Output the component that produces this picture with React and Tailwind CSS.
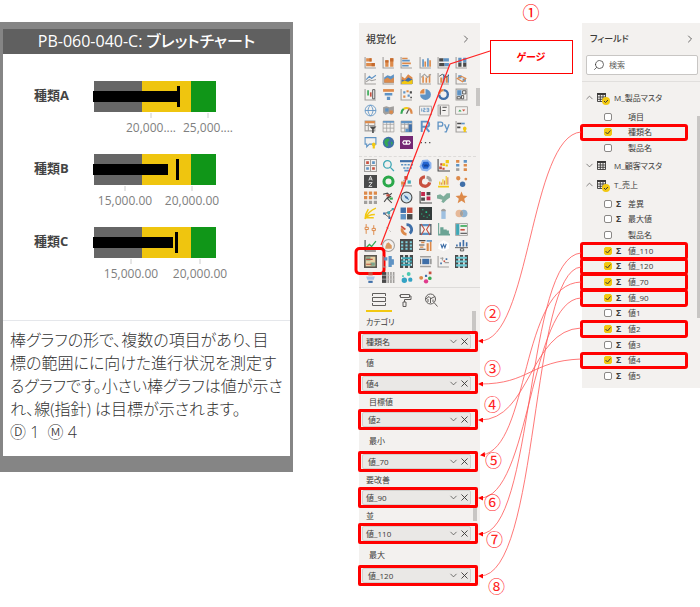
import React, { useState } from 'react';
import { ChevronDown, ChevronRight, ChevronUp, Search, X } from 'lucide-react';
import clsx from 'clsx';

const O = '#dd8a4a';
const B = '#5f93c4';
const N = '#3f6fa8';
const G = '#a19f9d';
const D = '#4a4a4a';
const Y = '#f2c811';
const T = '#3fa7b5';
const R = '#c9503f';
const V = '#35a853';

// [colour, path, stroke width] - no width means a filled path
const AXIS = [G, 'M1 1v10h10', 1];
const GRID = 'M1 1h10v10H1zM1 4h10M1 7.5h10M4.3 1v10M7.6 1v10';

const STANDARD = [
    [AXIS, [O, 'M2 2h5v3H2zM2 6.5h8v3H2z'], ['#c46a2e', 'M5 2h2v3H5zM7 6.5h3v3H7z']],
    [AXIS, [O, 'M3 4h3v6H3zM7.5 2h3v8h-3z'], ['#c46a2e', 'M3 4h3v2H3zM7.5 2h3v3h-3z']],
    [AXIS, [O, 'M2 1.5h5V3H2zM2 6h8v1.5H2z'], [B, 'M2 3.5h7V5H2zM2 8.2h6v1.5H2z']],
    [AXIS, [B, 'M3 3h1.5v7H3zM7.5 2H9v8H7.5z'], [O, 'M5 5h1.5v5H5zM9.5 4H11v6H9.5z']],
    [AXIS, [D, 'M2 2h4v3H2zM2 6.5h5v3H2z'], [B, 'M6 2h5v3H6zM7 6.5h4v3H7z']],
    [AXIS, [D, 'M3 6h3v4H3zM7.5 6h3v4h-3z'], [B, 'M3 1.5h3V6H3zM7.5 1.5h3V6h-3z']],
    [AXIS, [B, 'M2 7l3-3 2 2 4-3', 1], [G, 'M2 9l3-2 2 1 4-1', 1]],
    [AXIS, [B, 'M2 5l3-2 3 1 3-2v8H2z'], [O, 'M2 7l3-2 3 2 3-2v5H2z']],
    [AXIS, [O, 'M1.5 4l3 2 3-4 4 3v6h-10z'], [N, 'M1.5 7l3 1 3-3 4 2v4h-10z'], [Y, 'M1.5 9l3-1 3 1 4-2v4h-10z']],
    [AXIS, [O, 'M3 4h1.5v6H3zM6 5h1.5v5H6zM9 2h1.5v8H9z'], [G, 'M2 5l3-3 3 3 3-3', 1]],
    [AXIS, [O, 'M3 5h2v5H3zM8 4h2v6H8z'], [B, 'M5.5 2H7v8H5.5zM10 2h1v8h-1z'], [D, 'M2 4l3-2 3 3 3-2', 0.8]],
    [AXIS, [B, 'M3 3h3v3H3zM7 6h3v3H7z'], [O, 'M2 6l4-2 4 2-3 3z', 1]],
    [AXIS, [V, 'M3 2h1.5v5H3z'], [R, 'M5.5 4H7v4H5.5z'], [D, 'M8 1.5h2V10H8z', 0.8]],
    [[O, 'M1 1h10v2.5H1z'], [B, 'M2.5 4.5h7v2.5h-7zM4.5 8h3v3h-3z']],
    [AXIS, [B, 'M3 3h2v2H3zM7 6h2v2H7z'], [O, 'M6 2h2v2H6zM3 7h2v2H3z'], [D, 'M9 3h2v2H9zM9.5 8H11v1.5H9.5z']],
    [[B, 'M6 1a5 5 0 1 1-5 5h5z'], [O, 'M5 .8V5H.8A5 5 0 0 1 5 .8z']],
    [[N, 'M6 2a4 4 0 1 1-4 4', 2.2], [O, 'M2 5.5a4 4 0 0 1 4-3.5', 2.2]],
    [[G, 'M1 1h10v10H1z', 1], [B, 'M2 2h4v5H2z'], [D, 'M7 2.5h3v3H7zM2 8h3v2H2zM6 7h2v3H6z', 0.8]],
    [[B, 'M6 1a5 5 0 1 0 0 10A5 5 0 1 0 6 1zM1 6h10M6 1c-3 3-3 7 0 10M6 1c3 3 3 7 0 10', 0.8]],
    [[G, 'M1 3l3-1 3 1 4-1v6l-2 2-3-1-3 1-2-2z'], [B, 'M3 4h3v3H3z'], [O, 'M7 6h3v3H7z']],
    [[V, 'M1.5 9a4.500 4.500 0 0 1 2-4.500', 2], [Y, 'M3.5 4.5a4.500 4.500 0 0 1 4-.5', 2], [O, 'M7.5 4a4.500 4.500 0 0 1 3 5', 2], [D, 'M6 9l2-4', 1]],
    [[G, 'M.5 2h11v8H.5z', 0.8], [B, 'M2.5 4v3M4 4h1.500v1.500H4V7h2M7 4h2v3H7M7 5.500h2', 0.8]],
    [[G, 'M1 1h10v10H1z', 0.8], [D, 'M3 2v8M5 3h4M5 6h3', 1]],
    [[G, 'M.5 2.5h11v7H.5z', 0.8], [V, 'M3 7l1.500-2L6 7z'], [R, 'M6.5 5h3L8 7z']],
    [[G, 'M1 1h9v9H1zM1 5h9M4 3v7', 1], [O, 'M1 1h9v2H1z'], [D, 'M5 6h6.500L9 8.500V12H7.500V8.500z']],
    [[G, GRID, 0.7], [B, 'M1 1h10v1.500H1z']],
    [[G, GRID, 0.8], [B, 'M1 1h10v2H1zM5 8h3v3H5z'], [N, 'M8 4h3v7H8z']],
    [[B, 'M2.5 11V1.500H7a2.300 2.300 0 0 1 0 4.800H2.500M6 6.500L9.500 11', 1.8]],
    [[B, 'M1 9V2h2.500a1.800 1.800 0 0 1 0 3.700H1M7 4l2 4.500M11.200 4L8.500 11H7', 1.2]],
    [AXIS, [D, 'M2 2.5h4v1.500H2zM2 6h3v1.500H2z'], [B, 'M6 2.500h3v1.500H6z'], [Y, 'M9 6a2 2 0 0 1 1 3.500V11H8V9.500A2 2 0 0 1 9 6z']],
    [[B, 'M1 1.500h10v6H5L2.500 10V7.500H1z', 1], [Y, 'M9 6a2 2 0 0 1 1 3.500V11.500H8V9.500A2 2 0 0 1 9 6z']],
    [[N, 'M6 .8a5.200 5.200 0 1 0 0 10.400A5.200 5.200 0 1 0 6 .8z'], [V, 'M3 3l3-1 1 2-2 2 1 3-2 1-2-4zM8 5l2 1-1 3z']],
    [['#742774', 'M0 0h12v12H0z'], ['#fff', 'M5.500 4.500h-2L2.500 6l1 1.500h2L6.500 4.500h2l1 1.500-1 1.500h-2z', 1]],
    [[D, 'M1.500 5.500h1.200v1.200H1.500zM5.400 5.500h1.200v1.200H5.400zM9.300 5.500h1.200v1.200H9.300z']],
];

const CUSTOM = [
    [[G, 'M.5.5h11v11H.5zM6 .5v11M.5 6h11', 1], [R, 'M2 2h2.500v2.500H2zM7.500 7.500H10V10H7.500z'], [B, 'M7.500 2H10v2.500H7.500zM2 7.500h2.500V10H2z']],
    [[T, 'M5 1.500a3.500 3.500 0 1 0 0 7 3.500 3.500 0 1 0 0-7zM7.500 7.500L11 11', 1.2]],
    [[N, 'M0 1h12v2H0z'], [B, 'M1 4.500h2v1.500H1zM4 4.500h2v1.500H4zM7 4.500h2v1.500H7zM10 4.500h2v1.500h-2zM3 7.500h2V9H3zM6 7.500h2V9H6zM9 7.500h2V9H9zM4 10h5v1.500H4z']],
    [['#8db4ee', 'M3 1l5-.5 3.500 3v5l-4 3-5-1L.5 7z'], ['#2464d0', 'M4 2.500h4.500L10 6 8 9H4L2.500 6z'], ['#103b8a', 'M4.500 5l1 2 1-2 1 2 1-2', 0.8]],
    [[D, 'M1 0v11h11', 1], [R, 'M2 7h2.500v2.500H2zM5 8h2v2H5zM3 4h2v2H3z'], [Y, 'M5 4h2.500v2.500H5zM8 1h3v3H8zM8 5h2v2H8z']],
    [[O, 'M1 1h3v2.500H1zM8 4.500h3V7H8zM8 8.500h3V11H8z'], [B, 'M8 1h3v2.500H8zM1 4.500h3V7H1z'], [G, 'M1 8.500h3V11H1z']],
    [[D, 'M0 0h12v12H0z'], ['#eee', 'M4.500 5L6 1l1.500 4M5 3.800h2M4.500 7h3l-3 3.500h3', 0.8]],
    [['#2ba84a', 'M6 1.800a4.200 4.200 0 1 0 0 8.400 4.200 4.200 0 1 0 0-8.400z', 2.8]],
    [[R, 'M4 1h3v3H4z'], [O, 'M1 6h3v3H1z'], [T, 'M7 5h3v3H7z'], [G, 'M1 10h10M5 4v5M3 5l4-1', 1]],
    [[R, 'M5.500 1.800a4.300 4.300 0 1 0 4.300 5', 3], [G, 'M7 2a4 4 0 0 1 3.500 4', 2.8]],
    [[Y, 'M1 10h10v1.500H1zM2 6h1v3H2zM5 4h1v5H5zM8 1h1v8H8z'], [O, 'M3.500 7h1v2h-1zM6.500 5h1v4h-1zM9.500 2h1v7h-1z']],
    [[N, 'M7 6a2.500 2.500 0 1 1 0 5 2.500 2.500 0 1 1 0-5z'], [O, 'M3 1a2 2 0 1 1 0 4 2 2 0 1 1 0-4zM10 2.500a1.300 1.300 0 1 1 0 2.600 1.300 1.300 0 1 1 0-2.600z']],
    [[O, 'M0 .5h3V3.500H0zM4.500.5h3v3h-3zM9 .5h3v3H9zM0 4.700h3v3H0zM4.500 4.700h3v3h-3z'], [G, 'M9 4.700h3v3H9zM0 9h3v3H0zM4.500 9h3v3h-3zM9 9h3v3H9z']],
    [[D, 'M1 3l4-1 3 3-3 2 4 4M9 2L5 6l-3 4', 1], [R, 'M4 3h3v2H4z'], [V, 'M7 6h3v2H7z']],
    [['#cfe3ee', 'M6 1a5 5 0 1 0 0 10A5 5 0 1 0 6 1z'], [D, 'M6 1a5 5 0 1 0 0 10A5 5 0 1 0 6 1z', 1], [N, 'M3.500 3.500L7 5.500 8.500 8.500 5 6.500z']],
    [[D, 'M1 0v11h11', 1], ['#c2274b', 'M2 1h3.500v3.500H2zM7 5h3.500v3.500H7z'], [D, 'M7 1h3.500v3H7zM2 6h3.500v3H2z']],
    [['#7fae9b', 'M0 4l3-1 3 2 3-3h3v4L9 8l-3 3-2-1 1-2-5-1z']],
    [[O, 'M6 .5l1.500 3.700 4 .3-3 2.700 1 4L6 9l-3.500 2.200 1-4-3-2.700 4-.3z']],
    [[Y, 'M1 11C3 6 6 3 11 1M1 11c2-3 5-4 9-4M1 11c0-4 1-6 3-9M2 10h7', 1.4]],
    [[D, 'M2 6l4-1 4-3M6 5l1 5M2 6l5 4', 0.8], [T, 'M5 4h2.500v2.500H5zM9 1h2v2H9z'], [N, 'M1 5h2v2H1zM6 9h2v2H6z']],
    [[N, 'M.5.5h5v5h-5z'], [R, 'M6.500.5h5v5h-5z'], [B, 'M.5 6.500h5v5h-5z'], [D, 'M6.500 6.500h5v5h-5z']],
    [['#333b3a', 'M0 0h12v12H0z'], ['#2cc28b', 'M3 2h1v1H3zM6 4h1.500v1.500H6zM9 7h1v1H9zM4 8h1v1H4zM2 6h1v1H2zM7 9h1v1H7z']],
    [['#9fc0e0', 'M4 3h4v8H4z'], [G, 'M4 3a2 1.500 0 0 1 4 0v1H4z']],
    [['#8fb2d0', 'M8 2.500a3.500 3.500 0 1 1 0 7 3.500 3.500 0 1 1 0-7z'], ['#e6b999', 'M4 2.500a3.500 3.500 0 1 1 0 7 3.500 3.500 0 1 1 0-7z'], [G, 'M6 3.200a3.500 3.500 0 0 1 0 5.600 3.500 3.500 0 0 1 0-5.600z']],
    [[O, 'M2 1v3M1 4h3v2H1zM2 6v4M9 2v3M7.500 5h3v2h-3zM9 7v4', 0.9]],
    [[G, 'M4 4l2 1M7 7l1 1', 0.8]],
    [[N, 'M6 1.500a4.500 4.500 0 0 1 3 8', 2.6], [O, 'M2 5a4.500 4.500 0 0 0 4 5.500', 2.6], [R, 'M1 3l4 3', 1.5]],
    [[B, 'M1 1h10v2H1zM1 9h10v2H1z'], [R, 'M2 1l3 5-3 5M10 1L7 6l3 5', 1], [D, 'M1 1v10M11 1v10', 1]],
    [['#6aa394', 'M1 0h1v10h10v1.500H1zM3 4h3v6H3zM6 6h3v4H6zM9 7h2v3H9z']],
    [[G, 'M.5.5h11v11H.5z', 0.8], [T, 'M1 1h3v10H1z'], [V, 'M5 2h6v1.500H5z'], [R, 'M5 5.500h4V7H5z'], [D, 'M5 9h6v1H5z']],
    [[D, 'M1 1v10h10', 1], [V, 'M2 8l3-3 2 2 4-5', 1.2]],
    [[G, 'M6 .5a5.500 5.500 0 1 0 0 11 5.500 5.500 0 1 0 0-11z', 1], ['#d99a62', 'M3 9c0-3 1-5 3-6l3 3v3z']],
    [[D, 'M0 0h12v12H0z'], ['#7fd0dc', 'M1 2h2v2H1zM5 2h2v2H5zM9 2h2v2H9zM1 5h2v2H1zM5 5h2v2H5zM9 5h2v2H9zM1 8h2v2H1zM5 8h2v2H5zM9 8h2v2H9z']],
    [[D, 'M0 1h6v1H0zM0 5h5v1H0zM0 9h6v1H0z'], [O, 'M2 2.500h3V4H2zM7 4h2v7H7zM10 2h1.500v9H10zM1 7h3v1H1z'], [B, 'M7 1h5v1.500H7z']],
    [['#fff', 'M2 4l4-3 5 3v5L6 11 1 9z'], [N, 'M3.500 4.500L4.700 8 6 5l1.300 3 1.200-3.500', 1]],
    [[N, 'M1 5h1.500v2H1zM4 3h1.500v4H4zM7 1h1.500v6H7zM10 3h1.500v4H10z'], [D, 'M0 8h12M5 9h3v2H5z', 0.8]],
    [['#5a5750', 'M0 0h12v12H0z'], ['#e8d3a6', 'M1.500 1.500h9v9h-9z'], ['#7aa58c', 'M2 2h4v3H2zM6 7h4v3H6z'], ['#b8553f', 'M2 3.500h6v1H2zM2 8h5v1H2z']],
    [[B, 'M2 2h3v3H2zM6 1h3v10H6zM9 4h2v5H9z'], [G, 'M1 1v10h3', 1]],
    [[D, 'M0 0h3v12H0zM4.500 0h3v12h-3zM9 0h3v12H9z'], [T, 'M1 2h10v2H1zM1 5h10v2H1zM1 8h10v2H1z'], ['#d8eef0', 'M1 2h1v2H1zM5.500 5h1v2h-1zM10 8h1v2h-1z']],
    [[G, 'M1 1h10v1.200H1zM1 10h10v1.200H1z'], [N, 'M3 3.500h6.500v5H3z'], [D, 'M1.500 3.500v5M11 3.500v5', 0.8]],
    [[G, 'M1 1v10h10M3 3h3M5 2v3M7 7h4', 1], [N, 'M3 7h1.500v1.500H3zM8 3h1.500v1.500H8z'], [R, 'M6 5h1.500v1.500H6z']],
    [[D, 'M0 0h3v12H0zM4.500 0h3v12h-3zM9 0h3v12H9z'], ['#6fcbd6', 'M1 1.500h10v2H1zM1 5h10v2H1zM1 8.500h10v2H1z']],
    [[R, 'M4 1h4v3H4z'], ['#a9c6e6', 'M2 5h8l-1 3H3z'], [N, 'M4 9h4v2H4z']],
    [[D, 'M0 1h4v10H0z'], [G, 'M5 1h1.500v10H5zM7.500 1H9v10H7.500zM10 1h1.500v10H10z'], ['#ccc', 'M0 4h12M0 7.500h12', 0.6]],
    [['#35a3c4', 'M4 6a2.500 2.500 0 1 1 0 5 2.500 2.500 0 1 1 0-5zM9.500 6a2 2 0 1 1 0 4 2 2 0 1 1 0-4z'], ['#4cc9b0', 'M8 1a1.800 1.800 0 1 1 0 3.600A1.800 1.800 0 1 1 8 1zM2 4h1.500v1.500H2z']],
    [['#e03a8c', 'M6.500 7.500a2 2 0 1 1 0 4 2 2 0 1 1 0-4z'], [O, 'M2 4.500a1.800 1.800 0 1 1 0 3.600 1.800 1.800 0 1 1 0-3.600z'], [V, 'M10 5a1.700 1.700 0 1 1 0 3.400A1.700 1.700 0 1 1 10 5z'], [N, 'M5.500 3.500h2v2h-2z'], [R, 'M9 .5h2.500V3H9z']],
];

const WELLS = [
    { label: 'カテゴリ', value: '種類名', height: 'h-[19px]' },
    { label: '値', value: '値4', height: 'h-[21px]' },
    { label: '目標値', value: '値2', height: 'h-[15px]', inset: true },
    { label: '最小', value: '値_70', height: 'h-[21px]', inset: true },
    { label: '要改善', value: '値_90', height: 'h-[15px]' },
    { label: '並', value: '値_110', height: 'h-[15px]' },
    { label: '最大', value: '値_120', height: 'h-[21px]', inset: true },
];

const TABLES = [
    {
        name: 'M_製品マスタ', open: true, used: true, listClass: 'h-[49px]',
        fields: [
            { name: '項目' },
            { name: '種類名', checked: true },
            { name: '製品名' },
        ],
    },
    { name: 'M_顧客マスタ', fields: [] },
    {
        name: 'T_売上', open: true, used: true, listClass: 'h-[190px]',
        fields: [
            { name: '差異', sum: true },
            { name: '最大値', sum: true },
            { name: '製品名' },
            { name: '値_110', sum: true, checked: true },
            { name: '値_120', sum: true, checked: true },
            { name: '値_70', sum: true, checked: true },
            { name: '値_90', sum: true, checked: true },
            { name: '値1', sum: true },
            { name: '値2', sum: true, checked: true },
            { name: '値3', sum: true },
            { name: '値4', sum: true, checked: true },
            { name: '値5', sum: true },
        ],
    },
];

const BULLETS = [
    { name: '種類A', value: 88, target: 85, ticks: [[58, '20,000....'], [115, '25,000....']] },
    { name: '種類B', value: 76, target: 84, ticks: [[32, '15,000.00'], [99, '20,000.00']] },
    { name: '種類C', value: 81, target: 83, ticks: [[38, '15,000.00'], [107, '20,000.00']] },
];

const STEPS = [
    { mark: '②', place: 'left-[125px] top-[302px]' },
    { mark: '③', place: 'left-[125px] top-[357px]' },
    { mark: '④', place: 'left-[125px] top-[393px]' },
    { mark: '⑤', place: 'left-[126px] top-[449px]' },
    { mark: '⑥', place: 'left-[125px] top-[491px]' },
    { mark: '⑦', place: 'left-[127px] top-[528px]' },
    { mark: '⑧', place: 'left-[129px] top-[575px]' },
];

const LINKS = [
    'M222 132C171 136 171 341 121 341',
    'M222 359C171 361 171 384 121 384',
    'M222 328C171 330 171 420 121 420',
    'M222 282C161 284 171 448 123 455',
    'M222 298C171 300 171 498 121 498',
    'M222 253C166 257 176 534 121 534',
    'M222 267C171 271 181 576 121 576',
];

const Glyph = ({ shapes }) => (
    <svg viewBox="0 0 12 12" className="size-[13px]" aria-hidden="true">
        {shapes.map(([color, d, width], i) => (
            <path key={i} d={d} fill={width ? 'none' : color} stroke={width ? color : 'none'} strokeWidth={width} />
        ))}
    </svg>
);

const BulletCard = () => (
    <section className="mt-[22px] min-w-0 flex-1 bg-[#858585] px-[3px] pt-[7px] pb-4">
        <h1 className="h-[25px] bg-[#606060] text-center text-[16px] leading-[25px] font-medium whitespace-nowrap text-white">
            PB-060-040-C: ブレットチャート
        </h1>
        <div className="bg-white">
            <div className="border-b border-gray-200 pt-[27px] pb-5">
                {BULLETS.map((b) => (
                    <div key={b.name} className="flex h-[73px] pl-[31px]">
                        <span className="w-[59px] text-[13px] leading-[29px] font-bold text-[#444]">{b.name}</span>
                        <svg width="160" height="60" className="overflow-visible">
                            <rect x="1" width="48" height="31" fill="#666" />
                            <rect x="49" width="49" height="31" fill="#efc50f" />
                            <rect x="98" width="25" height="31" fill="#109618" />
                            <rect y="10" width={b.value - 1} height="11" />
                            <rect x={b.target - 1} y="5" width="3" height="21" />
                            {b.ticks.map(([x, text]) => (
                                <g key={text}>
                                    <path d={`M${x} 32v5`} stroke="#ccc" />
                                    <text x={x} y="51" textAnchor="middle" fontSize="12" fill="#808080">{text}</text>
                                </g>
                            ))}
                        </svg>
                    </div>
                ))}
            </div>
            <p className="px-[7px] pt-2 pb-3 text-[16px] leading-[23px] font-light whitespace-nowrap text-[#333]">
                棒グラフの形で、複数の項目があり、目<br />
                標の範囲にに向けた進行状況を測定す<br />
                るグラフです。小さい棒グラフは値が示さ<br />
                れ、線(指針) は目標が示されます。<br />
                Ⓓ 1&nbsp; Ⓜ 4
            </p>
        </div>
    </section>
);

const IconGrid = ({ icons, name, selected, className }) => (
    <div className={clsx('mr-[9px] ml-0.5 grid grid-cols-6', className)}>
        {icons.map((shapes, i) => (
            <button key={i} type="button" aria-label={`${name} ${i + 1}`} className="relative flex min-h-0 items-center justify-center">
                <Glyph shapes={shapes} />
                {i === selected && (
                    <span className="absolute top-1/2 left-1/2 h-7 w-[31px] -translate-1/2 rounded-[5px] border-3 border-[#f00]" />
                )}
            </button>
        ))}
    </div>
);

const Well = ({ label, value, height, inset }) => (
    <div>
        <div className={clsx('flex items-center text-[8px] leading-3', height, inset ? 'pl-[10px]' : 'pl-[7px]')}>{label}</div>
        <div className="relative mr-0.5 -ml-px flex h-[21px] rounded-[2px] border-3 border-[#f00] bg-[#f3f1ef] pr-1 pl-px">
            <div className={clsx('flex flex-1 items-center rounded-[2px] border border-[#d2d0ce] bg-[#eae8e6] text-[8px]', inset ? 'pl-[5px]' : 'pl-[3px]')}>
                <span className="flex-1">{value}</span>
                <button type="button" aria-label={`${label} メニュー`}><ChevronDown size={11} strokeWidth={1.5} /></button>
                <button type="button" aria-label={`${label} 削除`}><X size={11} strokeWidth={2} /></button>
            </div>
        </div>
    </div>
);

const VisualPanel = () => (
    <section className="relative mt-[23px] w-[121px] shrink-0 self-start bg-[#f3f1ef] text-[#3b3a39]">
        <div className="flex h-8 items-center justify-between pr-2 pl-[7px]">
            <h2 className="text-[10px] font-medium">視覚化</h2>
            <ChevronRight size={12} strokeWidth={1.5} />
        </div>
        <IconGrid icons={STANDARD} name="標準ビジュアル" className="h-[95px]" />
        <div className="mt-1.5 mr-1 border-t border-dashed border-[#dddbd9]" />
        <IconGrid icons={CUSTOM} name="カスタムビジュアル" selected={36} className="h-[128px]" />
        <div className="mt-0.5 border-t border-[#dddbd9]" />
        <div className="flex pl-[7px]">
            <button type="button" aria-label="フィールド" className="flex h-6 w-[26px] items-center justify-center border-b-2 border-[#f2c811]">
                <svg width="14" height="14" viewBox="0 0 14 14" fill="none" stroke="#605e5c">
                    <path d="M.5 4V1.500h13V4M.5 5.500h13v4H.5zM.5 11v2.500h13V11" />
                </svg>
            </button>
            <button type="button" aria-label="書式" className="flex h-6 w-[26px] items-center justify-center">
                <svg width="14" height="14" viewBox="0 0 14 14" fill="none" stroke="#605e5c">
                    <path d="M2.500 1.500h9v3h-9zM2.500 3h-1v-.5M11.500 3h1.500v3.500H6.500V9M5 9h3v4.500H5z" />
                </svg>
            </button>
            <button type="button" aria-label="分析" className="flex h-6 w-[26px] items-center justify-center">
                <svg width="14" height="14" viewBox="0 0 14 14" fill="none" stroke="#605e5c">
                    <circle cx="6.500" cy="6" r="5" />
                    <path d="M10 9.500l3.500 4M4 9V6M6.500 10V5M9 9V6.500M2 6l3-2.500 2 2L11 3.500" />
                </svg>
            </button>
        </div>
        <span className="absolute top-[65px] right-0 h-[18px] w-1 bg-[#c8c6c4]" />
        <span className="absolute top-[288px] right-1 h-5 w-1 bg-[#c8c6c4]" />
        <span className="absolute top-[478px] right-[3px] h-5 w-1 bg-[#c8c6c4]" />
        {WELLS.map((w) => <Well key={w.label} {...w} />)}
    </section>
);

const FieldRow = ({ field }) => {
    const [checked, setChecked] = useState(!!field.checked);

    return (
        <li className="min-h-0">
            <label className={clsx('flex h-full items-center pl-[23px]', field.checked && 'rounded-[2px] outline-3 -outline-offset-2 outline-[#f00]')}>
                <span className="relative flex size-2">
                    <input
                        type="checkbox" checked={checked} onChange={(e) => setChecked(e.target.checked)}
                        className="size-2 appearance-none rounded-[2px] border border-[#8a8886] bg-white checked:border-[#f2c811] checked:bg-[#f2c811]"
                    />
                    {checked && (
                        <svg viewBox="0 0 8 8" className="pointer-events-none absolute inset-0 size-2">
                            <path d="M1.500 4l2 2 3-3.500" fill="none" stroke="#3b3a39" />
                        </svg>
                    )}
                </span>
                <span className="w-4 pl-1 text-[9px] leading-3 font-bold">{field.sum && 'Σ'}</span>
                <span className="text-[8px] leading-3">{field.name}</span>
            </label>
        </li>
    );
};

const FieldPanel = () => (
    <section className="relative mt-[23px] w-[118px] shrink-0 self-start bg-[#f3f1ef] pb-1 text-[#3b3a39]">
        <div className="flex h-8 items-center justify-between pr-1 pl-2">
            <h2 className="text-[9px] font-medium">フィールド</h2>
            <ChevronRight size={12} strokeWidth={1.5} />
        </div>
        <label className="mr-0.5 ml-1 flex h-5 items-center gap-1 rounded-[2px] border border-[#c8c6c4] bg-white pl-1.5">
            <Search size={12} strokeWidth={1.5} className="shrink-0 -scale-x-100" />
            <input type="text" aria-label="検索" placeholder="検索" className="w-full min-w-0 text-[8px] outline-none placeholder:text-[#605e5c]" />
        </label>
        <div className="mt-1.5 mb-1.5 border-t border-[#e1dfdd]" />
        {TABLES.map((t) => (
            <div key={t.name}>
                <div className="flex h-[19px] items-center pl-0.5">
                    {t.open ? <ChevronUp size={11} strokeWidth={1.3} /> : <ChevronDown size={11} strokeWidth={1.3} />}
                    <span className="relative ml-0.5 flex w-[17px]">
                        <svg width="9" height="9" viewBox="0 0 9 9" fill="none" stroke="#3b3a39">
                            <path d="M.5 1.500h8v7h-8zM.5 4h8M.5 6.300h8M3.300 2v6.500M6 2v6.500" strokeWidth="0.9" />
                            <path d="M0 1h9" strokeWidth="2" />
                        </svg>
                        {t.used && (
                            <svg viewBox="0 0 8 8" className="absolute top-1 left-[5px] size-2">
                                <circle cx="4" cy="4" r="4" fill="#f2c811" />
                                <path d="M2 4l1.500 1.500L6 3" fill="none" stroke="#3b3a39" />
                            </svg>
                        )}
                    </span>
                    <span className="text-[8px] leading-3">{t.name}</span>
                </div>
                {t.fields.length > 0 && (
                    <ul className={clsx('mr-[13px] -ml-px grid auto-rows-fr pt-0.5', t.listClass)}>
                        {t.fields.map((f) => <FieldRow key={f.name} field={f} />)}
                    </ul>
                )}
            </div>
        ))}
        <span className="absolute top-[93px] right-0 h-[202px] w-[3px] bg-[#c8c6c4]" />
    </section>
);

const App = () => (
    <main className="flex min-h-screen items-start gap-[66px] bg-white font-['Open_Sans','Noto_Sans_CJK_JP',sans-serif] [font-feature-settings:'palt']" lang="ja">
        <BulletCard />
        <div className="relative flex shrink-0 pb-5">
            <VisualPanel />
            <div className="flex w-[102px] flex-col items-center text-[#f00]">
                <span className="text-[17px] leading-[26px]">①</span>
                <div className="mt-3.5 flex h-[34px] w-[83px] items-center justify-center border border-[#f00] bg-white text-[10px] font-bold">
                    ゲージ
                </div>
            </div>
            <FieldPanel />

            {/* connectors between fields and wells */}
            <svg width="341" height="607" className="pointer-events-none absolute top-0 left-0" fill="none" stroke="#f55">
                <defs>
                    <marker id="head" markerUnits="userSpaceOnUse" markerWidth="5" markerHeight="5" refX="3" refY="2.5" orient="auto">
                        <path d="M0 0l5 2.500-5 2.500z" fill="#f00" stroke="none" />
                    </marker>
                </defs>
                <path d="M22 245L91 64l40-13" stroke="#f22" strokeWidth="1.200" />
                {LINKS.map((d) => <path key={d} d={d} strokeWidth="0.8" markerEnd="url(#head)" />)}
            </svg>
            {STEPS.map((s) => (
                <span key={s.mark} className={clsx('absolute text-[17px] leading-6 text-[#f22]', s.place)}>{s.mark}</span>
            ))}
        </div>
    </main>
);

export default App;
